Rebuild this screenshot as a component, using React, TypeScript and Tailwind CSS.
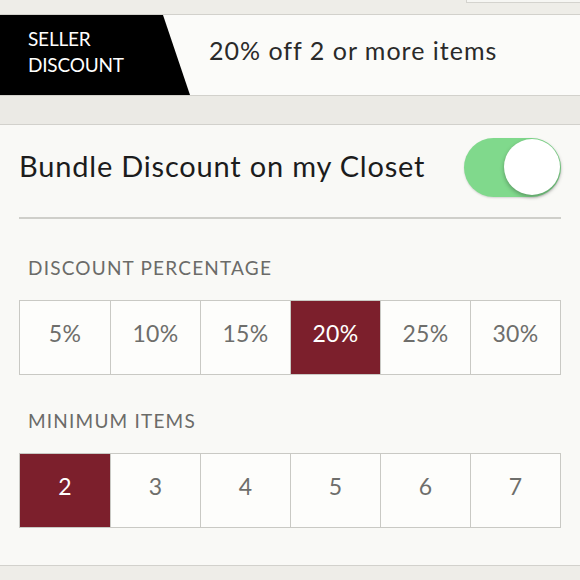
const percents = ["5%", "10%", "15%", "20%", "25%", "30%"];
const items = ["2", "3", "4", "5", "6", "7"];

function Segments({ options, active }: { options: string[]; active: string }) {
  return (
    <div className="grid grid-cols-6 border border-[#c9c9c4] bg-white">
      {options.map((o, i) => (
        <div
          key={o}
          className={`h-[73px] flex items-center justify-center pb-[9px] text-[23px] tracking-[0.3px] ${i > 0 ? "border-l border-[#c9c9c4]" : ""} ${
            o === active ? "bg-[#7c1f2c] text-white" : "bg-[#fdfdfb] text-[#6e6e6b]"
          }`}
        >
          {o}
        </div>
      ))}
    </div>
  );
}

export default function App() {
  return (
    <div className="w-[580px] h-[580px] overflow-hidden bg-[#eeede8] flex flex-col font-['Lato','Liberation_Sans',sans-serif]">
      {/* top strip */}
      <div className="h-[14px] flex justify-end">
        <div className="w-[114px] h-[3px] border-l border-b border-[#d4d3ce] bg-[#f6f6f3]" />
      </div>

      {/* seller discount banner */}
      <div className="h-[82px] flex bg-[#fbfbf9] border-t border-b border-[#d2d1cc]">
        <div className="w-[190px] bg-black text-white [clip-path:polygon(0_0,163px_0,190px_100%,0_100%)] flex flex-col justify-center pl-[28px] pb-[6px] text-[19px] leading-[26px] tracking-[-0.2px]">
          <span>SELLER</span>
          <span>DISCOUNT</span>
        </div>
        <div className="flex items-center pl-[19px] text-[25px] tracking-[1px] text-[#2a2a2a] pb-[8px]">20% off 2 or more items</div>
      </div>

      {/* textured gap */}
      <div className="h-[28px] bg-[#ebeae5]" />

      {/* card */}
      <div className="flex-1 bg-[#f9f9f6] border-t border-b border-[#d2d1cc] px-[19px] mb-[14px]">
        <div className="h-[94px] flex items-center justify-between border-b-2 border-[#cfcfca] pt-[2px]">
          <span className="text-[29px] tracking-[0.8px] text-[#1c1c1c] pb-[12px]">Bundle Discount on my Closet</span>
          <div className="w-[97px] h-[59px] rounded-full bg-[#80d98c] flex items-center justify-end pr-[1px] mb-[10px] shadow-[0_1px_2px_rgba(0,0,0,0.15)]">
            <div className="w-[56px] h-[56px] rounded-full bg-white shadow-[0_2px_4px_rgba(0,0,0,0.3)]" />
          </div>
        </div>

        <div className="pl-[9px] pt-[38px] pb-[21px] text-[19px] leading-[22px] tracking-[1.2px] text-[#6b6b68]">DISCOUNT PERCENTAGE</div>
        <Segments options={percents} active="20%" />

        <div className="pl-[9px] pt-[35px] pb-[21px] text-[19px] leading-[22px] tracking-[1.2px] text-[#6b6b68]">MINIMUM ITEMS</div>
        <Segments options={items} active="2" />
      </div>
    </div>
  );
}
